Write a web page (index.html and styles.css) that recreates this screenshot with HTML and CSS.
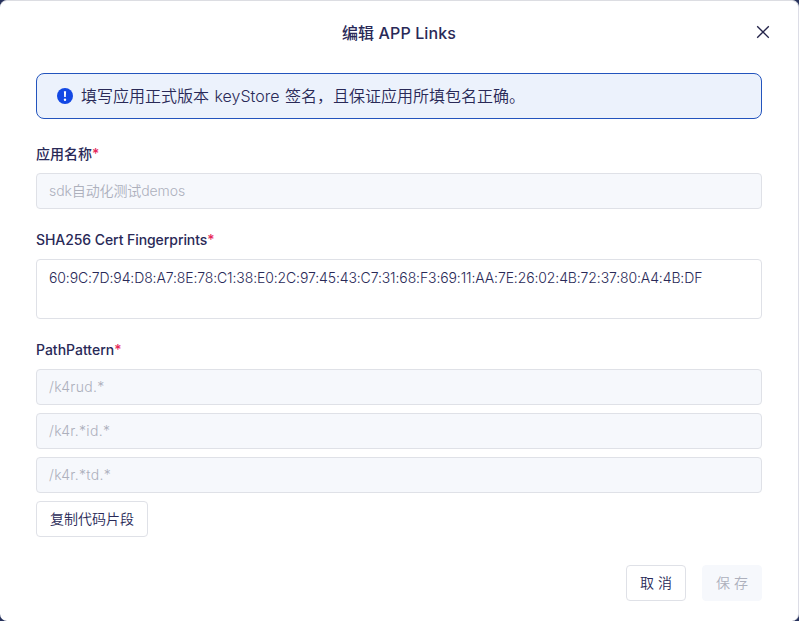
FILE: index.html
```html
<!DOCTYPE html>
<html lang="zh-CN">
<head>
<meta charset="utf-8">
<title>编辑 APP Links</title>
<link rel="stylesheet" href="styles.css">
</head>
<body>
<div class="backdrop">
  <section class="modal">
    <header class="modal-header">
      <h1 class="modal-title">编辑 APP Links</h1>
      <button class="close" aria-label="关闭">
        <svg width="14" height="14" viewBox="0 0 14 14"><path d="M1.2 1.2 12.8 12.8M12.8 1.2 1.2 12.8" fill="none" stroke="currentColor" stroke-width="1.3"/></svg>
      </button>
    </header>
    <div class="alert">
      <svg class="alert-icon" width="16" height="16" viewBox="0 0 16 16"><circle cx="8" cy="8" r="8" fill="#1348e4"/><path d="M6.9 3.3h2.2L8.8 9H7.2z" fill="#fff"/><circle cx="8" cy="11.7" r="1.2" fill="#fff"/></svg>
      <span class="alert-text">填写应用正式版本 <span class="latin">keyStore</span> 签名，且保证应用所填包名正确。</span>
    </div>
    <div class="field field-first">
      <div class="label"><span class="label-text">应用名称</span><span class="required">*</span></div>
      <div class="input disabled"><span class="app-name">sdk自动化测试demos</span></div>
    </div>
    <div class="field">
      <div class="label"><span class="label-text label-cert">SHA256 Cert Fingerprints</span><span class="required">*</span></div>
      <div class="input textarea"><span class="fingerprint">60:9C:7D:94:D8:A7:8E:78:C1:38:E0:2C:97:45:43:C7:31:68:F3:69:11:AA:7E:26:02:4B:72:37:80:A4:4B:DF</span></div>
    </div>
    <div class="field">
      <div class="label"><span class="label-text">PathPattern</span><span class="required">*</span></div>
      <div class="patterns">
        <div class="input disabled"><span class="pattern">/k4rud.*</span></div>
        <div class="input disabled"><span class="pattern">/k4r.*id.*</span></div>
        <div class="input disabled"><span class="pattern">/k4r.*td.*</span></div>
        <button class="button copy">复制代码片段</button>
      </div>
    </div>
    <footer class="modal-footer">
      <button class="button cancel">取 消</button>
      <button class="button save" disabled>保 存</button>
    </footer>
  </section>
</div>
</body>
</html>
```
FILE: styles.css
```css
* { box-sizing: border-box; }
body {
  margin: 0;
  font-family: Inter, "Noto Sans CJK SC", sans-serif;
  font-size: 14px;
  font-weight: 350;
  color: #292957;
}
.backdrop {
  height: 621px;
  background: #27325c;
  overflow: hidden;
}
.modal {
  height: 621px;
  padding: 0 36px;
  border-top: 1px solid #dcdde2;
  border-right: 1px solid #dcdde6;
  border-radius: 7px;
  background: #fff;
}
.modal-header {
  display: grid;
  grid-template-columns: 14px 1fr 14px;
  align-items: center;
  height: 64px;
  margin-right: -8px;
}
.modal-title {
  grid-column: 2;
  margin: -2px 8px 0 0;
  text-align: center;
  font-size: 16px;
  font-weight: 450;
  letter-spacing: 0.12px;
}
.close {
  width: 14px;
  height: 14px;
  padding: 0;
  border: 0;
  background: none;
  color: #24244a;
  margin-top: -2px;
}
.close svg { display: block; }
.alert {
  display: flex;
  align-items: center;
  gap: 8px;
  height: 46px;
  margin-top: 8px;
  padding: 0 20px;
  border: 1px solid #2354bd;
  border-radius: 8px;
  background: #ecf2fc;
}
.alert-text { font-size: 16px; line-height: 24px; white-space: nowrap; }
.latin { margin: 0 1px; }
.field { margin-top: 20px; }
.field-first { margin-top: 24px; }
.label {
  height: 22px;
  margin-bottom: 8px;
  line-height: 22px;
  font-weight: 450;
  white-space: nowrap;
}
.label-cert { letter-spacing: -0.07px; }
.required { color: #e6285a; }
.input {
  display: flex;
  align-items: center;
  height: 36px;
  padding: 0 12px 2px;
  border: 1px solid #dfe1e7;
  border-radius: 4px;
  background: #fff;
  white-space: nowrap;
}
.disabled { background: #f6f8fc; color: #adb0bc; }
.app-name { letter-spacing: -0.1px; }
.pattern { letter-spacing: 0.3px; }
.textarea { height: 60px; align-items: flex-start; padding-top: 7px; line-height: 22px; }
.fingerprint { letter-spacing: -0.12px; }
.patterns { display: flex; flex-direction: column; align-items: stretch; gap: 8px; }
.button {
  height: 36px;
  padding: 0 0 2px;
  border: 1px solid #dfe1e7;
  border-radius: 4px;
  background: #fff;
  color: inherit;
  font: inherit;
  white-space: nowrap;
}
.copy { width: 112px; }
.modal-footer {
  display: flex;
  justify-content: flex-end;
  gap: 16px;
  margin-top: 28px;
}
.cancel { width: 60px; }
.save { width: 60px; border-color: #f6f8fc; background: #f6f8fc; color: #adb0bc; }
```
